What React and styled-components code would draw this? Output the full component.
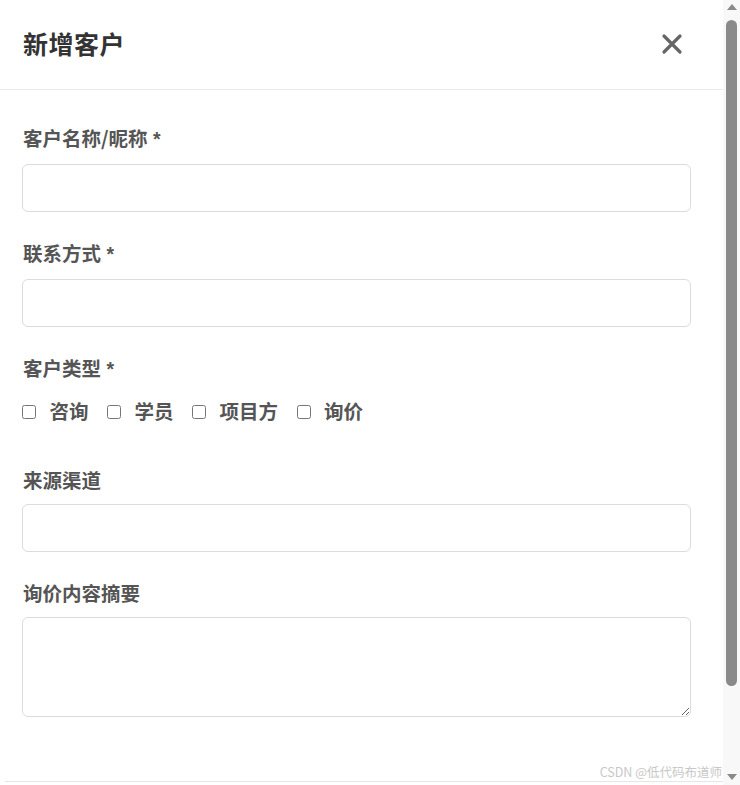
import React from 'react'
import styled, { createGlobalStyle } from 'styled-components'

const Global = createGlobalStyle`
	html, body {
		margin: 0;
		padding: 0;
		background: #fff;
		overflow: hidden;
	}
	body {
		font-family: "Noto Sans CJK SC", "Noto Sans", sans-serif;
	}
`

const fields = [
	{ label: '客户名称/昵称', required: true, kind: 'input' },
	{ label: '联系方式', required: true, kind: 'input' },
	{ label: '客户类型', required: true, kind: 'checks' },
	{ label: '来源渠道', kind: 'input' },
	{ label: '询价内容摘要', kind: 'textarea' },
]

const types = ['咨询', '学员', '项目方', '询价']

export default function App() {
	return (
		<Screen>
			<Global />
			<Dialog>
				<Header>
					<Title>新增客户</Title>
					<Close aria-label="close">
						<svg width="22" height="22" viewBox="0 0 22 22">
							<path d="M3 3 L19 19 M19 3 L3 19" stroke="#666" strokeWidth="3.2" strokeLinecap="round" />
						</svg>
					</Close>
				</Header>
				<Body>
					{fields.map((f) => (
						<Field key={f.label} tight={f.kind === 'checks'}>
							<Label>
								{f.label}
								{f.required && <Star> *</Star>}
							</Label>
							{f.kind === 'input' && <Input type="text" />}
							{f.kind === 'textarea' && <TextArea />}
							{f.kind === 'checks' && (
								<Checks>
									{types.map((t) => (
										<Check key={t}>
											<Box type="checkbox" />
											<span>{t}</span>
										</Check>
									))}
								</Checks>
							)}
						</Field>
					))}
				</Body>
				<Footer />
			</Dialog>
			<Scrollbar>
				<Arrow />
				<Track>
					<Thumb />
				</Track>
				<Arrow down />
			</Scrollbar>
			<Watermark>CSDN @低代码布道师</Watermark>
		</Screen>
	)
}

const Screen = styled.div`
	position: relative;
	display: flex;
	width: 740px;
	height: 785px;
	overflow: hidden;
`

const Dialog = styled.div`
	width: 723px;
	display: flex;
	flex-direction: column;
`

const Header = styled.div`
	height: 89px;
	flex-shrink: 0;
	display: flex;
	align-items: center;
	justify-content: space-between;
	padding: 0 40px 0 23px;
	border-bottom: 1px solid #ebebeb;
`

const Title = styled.h2`
	margin: -3px 0 0;
	font-size: 25px;
	font-weight: 700;
	color: #333;
	letter-spacing: 0.5px;
`

const Close = styled.div`
	width: 22px;
	height: 22px;
	margin-top: -2px;
	display: flex;
`

const Body = styled.div`
	flex: 1;
	padding: 35px 32px 0 22px;
	display: flex;
	flex-direction: column;
`

const Field = styled.div`
	display: flex;
	flex-direction: column;
	margin-bottom: ${(p) => (p.tight ? '44px' : '28px')};
`

const Label = styled.label`
	font-size: 19.5px;
	line-height: 25px;
	font-weight: 700;
	color: #555;
	padding-left: 1px;
	margin-bottom: 12px;
`

const Star = styled.span`
	font-family: "Liberation Sans", Arial, sans-serif;
`

const Input = styled.input`
	box-sizing: border-box;
	width: 100%;
	height: 48px;
	border: 1px solid #dcdcdc;
	border-radius: 6px;
	outline: none;
	padding: 0 12px;
	font-size: 16px;
`

const TextArea = styled.textarea`
	box-sizing: border-box;
	width: 100%;
	height: 100px;
	border: 1px solid #dcdcdc;
	border-radius: 6px;
	outline: none;
	padding: 10px 12px;
	font-size: 16px;
	resize: vertical;
`

const Checks = styled.div`
	display: flex;
	align-items: center;
	gap: 18.5px;
	height: 26px;
	margin-top: 3px;
`

const Check = styled.label`
	display: flex;
	align-items: center;
	gap: 13.5px;
	font-size: 19.5px;
	font-weight: 700;
	color: #555;
`

const Box = styled.input`
	width: 14px;
	height: 14px;
	margin: 4px 0 0 0;
`

const Footer = styled.div`
	height: 3px;
	margin-left: 5px;
	border-top: 1px solid #e6e6e6;
	flex-shrink: 0;
`

const Scrollbar = styled.div`
	width: 17px;
	background: #f8f8f8;
	display: flex;
	flex-direction: column;
	align-items: center;
`

const Arrow = styled.div`
	width: 0;
	height: 0;
	margin: 4px 0 5px;
	border-left: 5px solid transparent;
	border-right: 5px solid transparent;
	${(p) => (p.down ? 'border-top: 6px solid #8a8a8a;' : 'border-bottom: 6px solid #8a8a8a;')}
`

const Track = styled.div`
	flex: 1;
	width: 100%;
	display: flex;
	justify-content: center;
	padding-top: 5px;
`

const Thumb = styled.div`
	width: 11px;
	height: 666px;
	border-radius: 6px;
	background: #8a8a8a;
`

const Watermark = styled.div`
	position: absolute;
	right: 18px;
	bottom: 4px;
	font-size: 12.5px;
	color: #c8c8c8;
	font-family: "Noto Sans CJK SC", sans-serif;
`
